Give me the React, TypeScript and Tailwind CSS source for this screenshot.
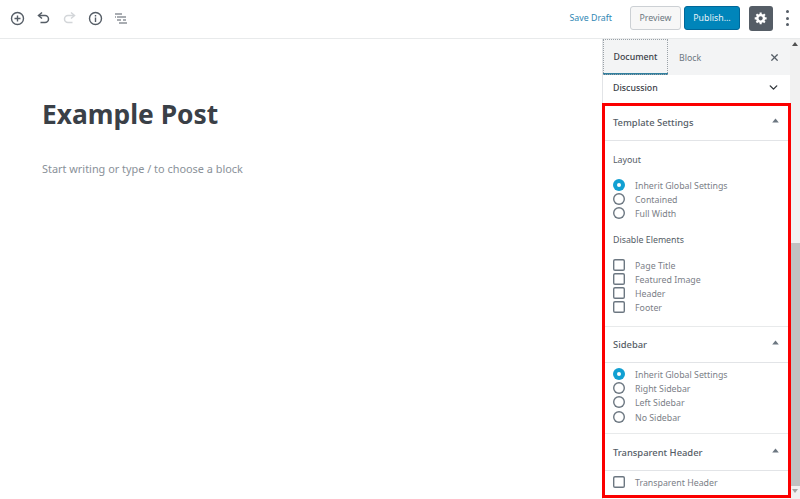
import { ChevronDown, X } from "lucide-react";

function Radio({ label, checked }: { label: string; checked?: boolean }) {
  return (
    <div className="flex h-[14.2px] items-center">
      {checked ? (
        <span className="flex h-[12px] w-[12px] items-center justify-center rounded-full bg-[#11a0d2]">
          <span className="h-[4px] w-[4px] rounded-full bg-white" />
        </span>
      ) : (
        <span className="h-[12px] w-[12px] rounded-full shadow-[inset_0_0_0_1.4px_#6c7781]" />
      )}
      <span className="ml-[10px] mt-[3px] text-[8.8px] text-[#7b8087]">{label}</span>
    </div>
  );
}

function Check({ label }: { label: string }) {
  return (
    <div className="flex h-[14.2px] items-center">
      <span className="h-[12px] w-[12px] rounded-[2px] shadow-[inset_0_0_0_1.4px_#6c7781]" />
      <span className="ml-[10px] mt-[3px] text-[8.8px] text-[#7b8087]">{label}</span>
    </div>
  );
}

function PanelHead({ title, height }: { title: string; height: string }) {
  return (
    <div className={`flex items-center justify-between border-b border-[#e2e4e7] pl-[10px] pr-[11px] ${height}`}>
      <span className="mt-[2px] text-[9.4px] font-medium text-[#555d66]">{title}</span>
      <svg width="7" height="5" viewBox="0 0 7 5" className="mb-[4px]">
        <path d="M3.5 0.5 L6.8 4.5 H0.2 Z" fill="#6c7781" />
      </svg>
    </div>
  );
}

export default function App() {
  return (
    <div className="flex h-[499px] w-[800px] flex-col overflow-hidden bg-white font-['Noto_Sans',sans-serif]">
      <header className="flex h-[39px] shrink-0 items-center justify-between border-b border-[#e8eaeb] pb-[2px] pl-[10px] pr-[11px]">
        <div className="flex items-center gap-[11px]">
          <svg width="15" height="15" viewBox="0 0 15 15" fill="none" stroke="#555d66" strokeWidth="1.4">
            <circle cx="7.5" cy="7.5" r="6" />
            <path d="M7.5 4.5v6M4.5 7.5h6" />
          </svg>
          <svg width="15" height="15" viewBox="0 0 15 15" fill="none" stroke="#555d66" strokeWidth="1.5">
            <path d="M6 1.5 2.5 4.5 6 7.5" />
            <path d="M3 4.5h6a3.5 3.5 0 0 1 0 7H4.5" />
          </svg>
          <svg width="15" height="15" viewBox="0 0 15 15" fill="none" stroke="#d3d6d9" strokeWidth="1.5">
            <path d="M9 1.5 12.5 4.5 9 7.5" />
            <path d="M12 4.5H6a3.5 3.5 0 0 0 0 7h4.5" />
          </svg>
          <svg width="15" height="15" viewBox="0 0 15 15" fill="none" stroke="#555d66" strokeWidth="1.4">
            <circle cx="7.5" cy="7.5" r="6" />
            <path d="M7.5 6.5v4.5M7.5 4v1.5" />
          </svg>
          <svg width="14" height="15" viewBox="0 0 14 15" fill="none" stroke="#555d66" strokeWidth="1.2">
            <path d="M1 3h7M3 6h9M3 9h4M5 12h8" />
            <path d="M1 6h1M9 9h3" />
          </svg>
        </div>
        <div className="flex items-center">
          <span className="mr-[18px] mt-[2px] text-[8.8px] text-[#2f86b3]">Save Draft</span>
          <button className="flex h-[24px] w-[51px] items-center justify-center rounded-[3px] border border-[#ccd0d4] bg-[#f7f7f7] pt-[2px] text-[8.8px] text-[#6c7781]">
            Preview
          </button>
          <button className="ml-[3px] flex h-[24px] w-[56px] items-center justify-center rounded-[3px] border border-[#006799] bg-[#0085ba] pt-[2px] text-[8.8px] text-[#e8f2f7]">
            Publish...
          </button>
          <button className="ml-[9px] flex h-[25px] w-[24px] items-center justify-center rounded-[3px] bg-[#555d66]">
            <svg width="14" height="14" viewBox="0 0 20 20" fill="white">
              <path d="M18 12h-2.18c-.17.7-.44 1.35-.81 1.93l1.54 1.54-2.1 2.1-1.54-1.54c-.58.36-1.23.63-1.91.79V19H8v-2.18c-.68-.16-1.33-.43-1.91-.79l-1.54 1.54-2.12-2.12 1.54-1.54c-.36-.58-.63-1.23-.79-1.91H1V9.03h2.17c.16-.7.44-1.35.8-1.94L2.43 5.55l2.1-2.1 1.54 1.54c.58-.37 1.24-.64 1.93-.81V2h3v2.18c.68.16 1.33.43 1.91.79l1.54-1.54 2.12 2.12-1.54 1.54c.36.59.64 1.24.8 1.94H18V12zm-8.5 1.5c1.66 0 3-1.34 3-3s-1.34-3-3-3-3 1.34-3 3 1.34 3 3 3z" />
            </svg>
          </button>
          <div className="ml-[13px] flex h-[16px] w-[3px] flex-col justify-between">
            <span className="h-[3px] w-[3px] rounded-full bg-[#555d66]" />
            <span className="h-[3px] w-[3px] rounded-full bg-[#555d66]" />
            <span className="h-[3px] w-[3px] rounded-full bg-[#555d66]" />
          </div>
        </div>
      </header>

      <div className="flex min-h-0 flex-1">
        <main className="flex-1 pl-[42px] pt-[56px]">
          <h1 className="text-[26.4px] font-bold leading-[38px] text-[#3a4047]">Example Post</h1>
          <p className="mt-[28px] text-[10.9px] leading-[16px] text-[#8a9199]">Start writing or type / to choose a block</p>
        </main>

        <aside className="relative flex w-[198px] shrink-0">
          <div className="flex w-[188px] flex-col border-l border-[#e2e4e7]">
            <div className="flex h-[36px] items-stretch justify-between bg-[#f3f4f5]">
              <div className="flex">
                <div className="flex w-[65px] items-center justify-center border-b-2 border-[#33809f] pt-[3px] text-[8.8px] font-medium text-[#3a4047] outline outline-1 -outline-offset-1 outline-dotted outline-[#9aa1a7]">
                  Document
                </div>
                <div className="ml-[11px] flex items-center pt-[3px] text-[8.8px] text-[#6c7781]">Block</div>
              </div>
              <div className="flex items-center pr-[10px]">
                <X size={11} strokeWidth={2.6} className="text-[#555d66]" />
              </div>
            </div>
            <div className="flex h-[25px] items-center justify-between pl-[10px] pr-[10px]">
              <span className="mt-[2px] text-[8.8px] font-medium text-[#3a4047]">Discussion</span>
              <ChevronDown size={13} strokeWidth={2.6} className="text-[#32373c]" />
            </div>

            <div className="mt-[4px]">
              <PanelHead title="Template Settings" height="h-[37px]" />
              <div className="h-[186px] border-b border-[#e8eaeb] pl-[10px] pt-[13px]">
                <div className="text-[8.8px] leading-[13px] text-[#555d66]">Layout</div>
                <div className="mt-[11px]">
                  <Radio label="Inherit Global Settings" checked />
                  <Radio label="Contained" />
                  <Radio label="Full Width" />
                </div>
                <div className="mt-[13px] text-[8.8px] leading-[13px] text-[#555d66]">Disable Elements</div>
                <div className="mt-[11px]">
                  <Check label="Page Title" />
                  <Check label="Featured Image" />
                  <Check label="Header" />
                  <Check label="Footer" />
                </div>
              </div>
              <PanelHead title="Sidebar" height="h-[36px]" />
              <div className="h-[71px] border-b border-[#e8eaeb] pl-[10px] pt-[4px]">
                <Radio label="Inherit Global Settings" checked />
                <Radio label="Right Sidebar" />
                <Radio label="Left Sidebar" />
                <Radio label="No Sidebar" />
              </div>
              <PanelHead title="Transparent Header" height="h-[37px]" />
              <div className="pl-[10px] pt-[4px]">
                <Check label="Transparent Header" />
              </div>
            </div>
          </div>

          <div className="flex w-[10px] flex-col bg-[#f1f1f1]">
            <svg width="10" height="10" viewBox="0 0 10 10">
              <path d="M5 3 8 7H2Z" fill="#505050" />
            </svg>
            <div className="mt-[194px] h-[243px] bg-[#c1c1c1]" />
            <svg width="10" height="10" viewBox="0 0 10 10">
              <path d="M5 7 8 3H2Z" fill="#a3a3a3" />
            </svg>
          </div>

          <div className="pointer-events-none absolute left-0 top-[64px] h-[395px] w-[189px] border-[3px] border-[#fb0000]" />
        </aside>
      </div>
    </div>
  );
}
